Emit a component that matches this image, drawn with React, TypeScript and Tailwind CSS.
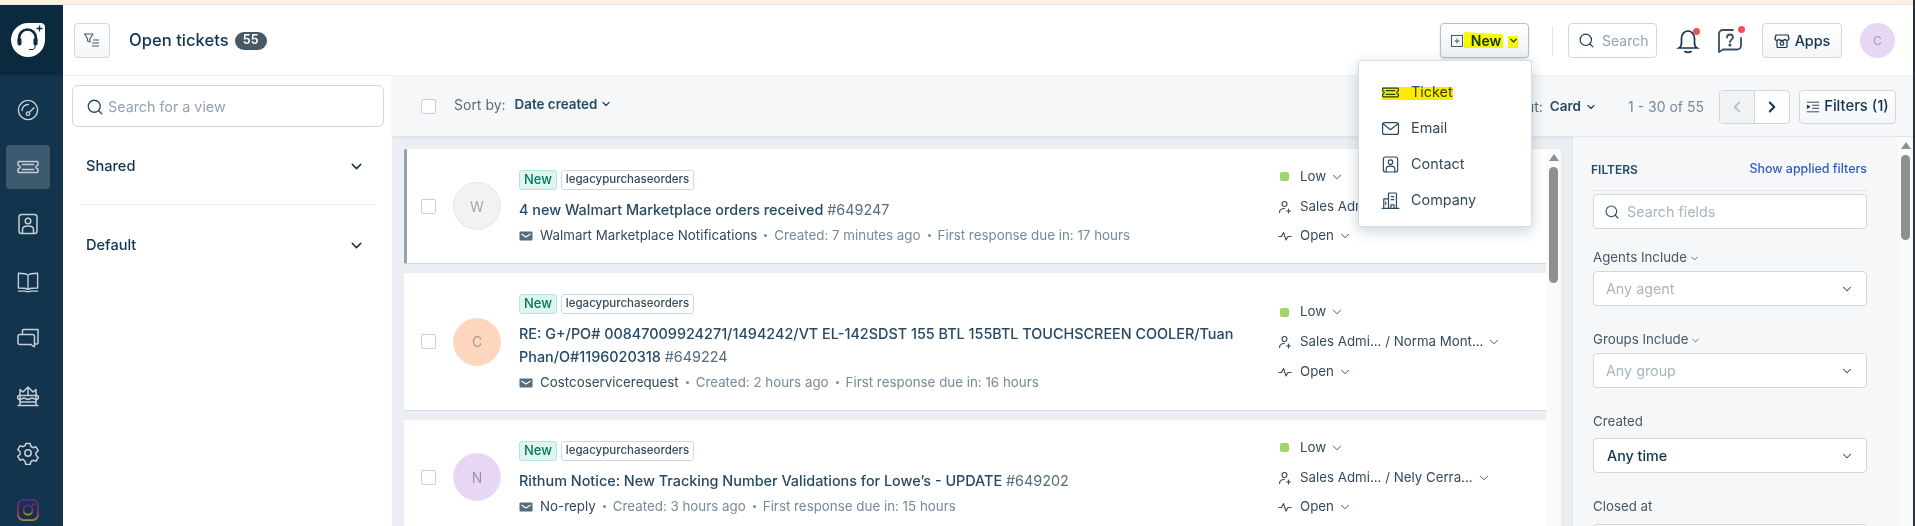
import { ChevronDown, ChevronLeft, ChevronRight, Search } from "lucide-react";
import type { ReactNode } from "react";

const FONT = "font-['Inter','Noto_Sans',sans-serif]";

function Ico({ size = 24, vb = 24, sw = 1.5, children, className = "" }: { size?: number; vb?: number; sw?: number; children: ReactNode; className?: string }) {
  return (
    <svg width={size} height={size} viewBox={`0 0 ${vb} ${vb}`} fill="none" stroke="currentColor" strokeWidth={sw} strokeLinecap="round" strokeLinejoin="round" className={className}>
      {children}
    </svg>
  );
}

const TicketGlyph = ({ size = 24, sw = 1.5 }: { size?: number; sw?: number }) => (
  <Ico size={size} sw={sw}>
    <path d="M3 6.5h18c.6 0 1 .4 1 1v2.4c-1.2.2-2 1-2 2.1s.8 1.9 2 2.1v2.4c0 .6-.4 1-1 1H3c-.6 0-1-.4-1-1v-2.4c1.2-.2 2-1 2-2.1s-.8-1.9-2-2.1V7.5c0-.6.4-1 1-1z" />
    <path d="M6.5 9.5h11M6.5 14.5h11" />
  </Ico>
);

const ContactGlyph = ({ size = 24, sw = 1.5 }: { size?: number; sw?: number }) => (
  <Ico size={size} sw={sw}>
    <rect x="3" y="2.5" width="18" height="19" rx="2.5" />
    <circle cx="12" cy="9" r="2.8" />
    <path d="M6.5 21v-3.5c0-2 1.8-3.5 5.5-3.5s5.5 1.5 5.500 3.500V21" />
  </Ico>
);

function SideItem({ active, children }: { active?: boolean; children: ReactNode }) {
  return (
    <div className={`flex h-[44px] w-[44px] shrink-0 items-center justify-center rounded-[4px] text-[#c5ced6] ${active ? "bg-[#3d5a6f]" : ""}`}>
      {children}
    </div>
  );
}

function Sidebar() {
  return (
    <aside className="flex h-full w-[63px] shrink-0 flex-col bg-[#12344d]">
      <div className="flex h-[70px] shrink-0 items-center justify-center bg-[#0b2a40] pr-[7px]">
        <svg width="36" height="36" viewBox="0 0 36 36">
          <path d="M18 1h13c2.2 0 4 1.800 4 4v13c0 9.400-7.600 17-17 17S1 27.400 1 18 8.600 1 18 1z" fill="#fff" />
          <path d="M9 20v-4a8.500 8.500 0 0 1 17 0v4" fill="none" stroke="#0b2a40" strokeWidth="2.600" />
          <rect x="7.500" y="16" width="4" height="7.500" rx="1.800" fill="#0b2a40" />
          <rect x="23.500" y="16" width="4" height="7.500" rx="1.800" fill="#0b2a40" />
          <path d="M25 23v2c0 1.600-1.200 2.500-3 2.500h-3" fill="none" stroke="#0b2a40" strokeWidth="1" />
          <path d="M29.500 3.500v6M26.500 6.500h6" fill="none" stroke="#0b2a40" strokeWidth="1.300" />
        </svg>
      </div>
      <nav className="flex flex-col items-center gap-[13.2px] overflow-hidden pt-[13px] pr-[7px]">
        <SideItem>
          <Ico size={22}>
            <circle cx="12" cy="12" r="10.500" />
            <path d="M5.500 12.500A6.500 6.500 0 0 1 12 6h.5M18.500 9.500l-5.200 5.200" />
            <circle cx="12" cy="16" r="1.900" />
          </Ico>
        </SideItem>
        <SideItem active>
          <TicketGlyph />
        </SideItem>
        <SideItem>
          <ContactGlyph />
        </SideItem>
        <SideItem>
          <Ico size={22}>
            <path d="M12 4.500C10.500 3 7 2.500 1.500 2.500v16c5.500 0 8.500.4 10.500 1.500 2-1.100 5-1.500 10.500-1.500v-16C17 2.500 13.500 3 12 4.500zM12 4.500V20" />
            <path d="M1.500 22H9l3 .8 3-.8h7.500" />
          </Ico>
        </SideItem>
        <SideItem>
          <Ico size={24}>
            <path d="M6.500 7V3.500c0-.6.400-1 1-1H22v13.500c0 .6-.4 1-1 1h-1.500" />
            <path d="M4 7.500h12.500c1.100 0 2 .9 2 2v9.500c0 .5-.5.800-.9.500L15 17.500H4c-1.100 0-2-.9-2-2v-6c0-1.100.9-2 2-2z" />
          </Ico>
        </SideItem>
        <SideItem>
          <Ico size={24}>
            <path d="M4 21.500V5.500l3 2.500 5-5 5 5 3-2.500v16M2 21.500h20M12 3.500v7" />
            <path d="M4 11.500H2.800a2.200 2.200 0 0 0 0 4H4M20 11.500h1.200a2.200 2.200 0 0 1 0 4H20M4 11.500h16M4 15.500l4-1.500 4 1.500 4-1.500 4 1.500M4 18h16" />
          </Ico>
        </SideItem>
        <SideItem>
          <Ico size={24}>
            <path d="M9.800 2.500h4.400l.7 3 2.100 1.200 3-.9 2.200 3.800-2.300 2.100v2.600l2.300 2.100-2.200 3.800-3-.9-2.100 1.200-.7 3H9.800l-.7-3L7 18.300l-3 .9-2.200-3.800 2.300-2.100v-2.600L1.800 8.600 4 4.800l3 .9 2.100-1.200z" />
            <circle cx="12" cy="12" r="3.200" />
          </Ico>
        </SideItem>
        <SideItem>
          <svg width="22" height="22" viewBox="0 0 24 24" fill="none">
            <defs>
              <linearGradient id="ig" x1="0" y1="0" x2="0" y2="1">
                <stop offset="0" stopColor="#5b2a8e" />
                <stop offset="0.6" stopColor="#8a2a5c" />
                <stop offset="1" stopColor="#b9823f" />
              </linearGradient>
            </defs>
            <rect x="1" y="1" width="22" height="22" rx="6" stroke="url(#ig)" strokeWidth="2" />
            <circle cx="12" cy="12" r="5" stroke="url(#ig)" strokeWidth="2" />
            <circle cx="18" cy="5.800" r="1.300" fill="#8a2a6c" />
          </svg>
        </SideItem>
      </nav>
    </aside>
  );
}

function HeaderBar() {
  return (
    <header className="relative flex h-[71px] shrink-0 items-center border-b border-[#ebeff3] bg-white pt-[1px] pr-[18px] pl-[11px]">
      <button className="flex h-[35px] w-[36px] items-center justify-center rounded-[4px] border border-[#cfd7df] bg-gradient-to-b from-white to-[#f3f5f7] text-[#475867]">
        <svg width="18" height="18" viewBox="0 0 18 18" fill="none" stroke="currentColor" strokeWidth="1.100">
          <path d="M1.500 2h8.500L7 6.500V10L4.500 9V6.500z" strokeLinejoin="round" />
          <path d="M10 8h6M9 11h7M9 14h7" />
        </svg>
      </button>
      <h1 className="ml-[19px] text-[16.6px] font-medium text-[#12344d]">Open tickets</h1>
      <span className="ml-[6px] flex h-[18px] w-[32px] items-center justify-center rounded-full bg-[#475867] text-[12.500px] font-semibold text-white">55</span>

      <div className="ml-auto flex items-center">
        <button className="relative flex h-[35px] w-[89px] items-center justify-center rounded-[4px] border border-[#b4bfca] bg-gradient-to-b from-white to-[#eef1f4] shadow-[0_1px_2px_rgba(18,52,77,0.2)] text-[#12344d]">
          <svg width="14" height="14" viewBox="0 0 14 14" fill="none" stroke="#475867" strokeWidth="1" className="mr-[7px]">
            <rect x="1.500" y="1.500" width="11" height="11" />
            <path d="M7 4.500v5M4.500 7h5" />
          </svg>
          <span className="text-[14px] font-semibold">New</span>
          <ChevronDown size={11} strokeWidth={3} className="ml-[7px]" />
          <span className="absolute top-[8px] left-[23px] h-[16px] w-[39px] bg-[#ffff00] mix-blend-multiply [clip-path:polygon(0_0,100%_15%,100%_100%,0_100%)]" />
          <span className="absolute top-[12px] left-[67px] h-[12px] w-[10px] bg-[#ffff00] mix-blend-multiply" />
        </button>
        <div className="mr-[15px] ml-[23px] h-[30px] w-px bg-[#dfe5ea]" />
        <div className="flex h-[35px] w-[89px] items-center rounded-[4px] border border-[#cfd7df] bg-white pl-[9px]">
          <Search size={17} strokeWidth={1.600} className="text-[#12344d]" />
          <span className="ml-[7px] text-[14px] text-[#92a2b1]">Search</span>
        </div>
        <div className="relative ml-[19px] text-[#12344d]">
          <svg width="24" height="28" viewBox="0 0 24 28" fill="none" stroke="currentColor" strokeWidth="1.700" strokeLinecap="round">
            <path d="M3 21c1.500-1 2.500-2.500 2.500-5v-4.500C5.500 7 8.500 4 12 4s6.500 3 6.500 7.500V16c0 2.500 1 4 2.500 5zM9 24.500c1.500 1.200 4.500 1.200 6 0" />
          </svg>
          <span className="absolute top-[1px] right-[0px] h-[7px] w-[7px] rounded-full bg-[#f24f4f]" />
        </div>
        <div className="relative ml-[16px] text-[#3b4f60]">
          <svg width="28" height="28" viewBox="0 0 28 28" fill="none" stroke="currentColor" strokeWidth="1.800" strokeLinecap="round">
            <path d="M17 3H7C4.800 3 3 4.800 3 7v18l4-2.500h14c2.200 0 4-1.800 4-4V11" strokeLinejoin="round" />
            <path d="M11 10.500c0-1.700 1.300-3 3-3s3 1.200 3 2.800c0 2.200-3 2.400-3 4.700" />
            <circle cx="14" cy="18" r="0.700" fill="currentColor" />
          </svg>
          <span className="absolute top-[-1px] right-[-1px] h-[7px] w-[7px] rounded-full bg-[#f24f4f]" />
        </div>
        <button className="ml-[18px] flex h-[35px] w-[80px] items-center justify-center rounded-[4px] border border-[#cfd7df] bg-gradient-to-b from-white to-[#f3f5f7] text-[14.400px] font-medium text-[#12344d]">
          <svg width="16" height="16" viewBox="0 0 16 16" fill="none" stroke="currentColor" strokeWidth="1.200" className="mr-[5px]">
            <path d="M3 7v6.500c0 .6.400 1 1 1h8c.6 0 1-.4 1-1V7M2 2h12l1 3.500c0 1-.9 1.800-2 1.800-.8 0-1.500-.4-2-1-.5.6-1.200 1-2 1h-2c-.8 0-1.500-.4-2-1-.5.6-1.200 1-2 1-1.100 0-2-.8-2-1.800z" strokeLinejoin="round" />
            <circle cx="8" cy="10.500" r="1.800" />
          </svg>
          Apps
        </button>
        <div className="ml-[18px] flex h-[35px] w-[35px] items-center justify-center rounded-full bg-[#e8d7f4] text-[12px] text-[#92a2b1]">C</div>
      </div>

      <Dropdown />
    </header>
  );
}

function MenuRow({ icon, label }: { icon: ReactNode; label: string }) {
  return (
    <li className="flex h-[36px] items-center">
      <span className="flex w-[30px] text-[#264966]">{icon}</span>
      <span className="text-[14.400px] text-[#344a5d]">{label}</span>
    </li>
  );
}

function Dropdown() {
  return (
    <div className="absolute top-[55px] right-[381px] z-20 h-[167px] w-[174px] rounded-[2px] border border-[#d5dbe1] bg-white shadow-[0_4px_14px_rgba(18,52,77,0.22)]">
      <ul className="px-[22px] pt-[13px]">
        <MenuRow icon={<TicketGlyph size={19} sw={1.6} />} label="Ticket" />
        <MenuRow
          icon={
            <Ico size={19} sw={1.5}>
              <rect x="2" y="4.500" width="20" height="15" rx="2.500" />
              <path d="M2.500 6l9.500 7.500L21.500 6" />
            </Ico>
          }
          label="Email"
        />
        <MenuRow icon={<ContactGlyph size={19} sw={1.5} />} label="Contact" />
        <MenuRow
          icon={
            <Ico size={19} sw={1.5}>
              <path d="M1.500 22h21M3.500 22V10h6M9.500 22V3.500c0-.6.400-1 1-1h8c.6 0 1 .4 1 1V22M12.500 22v-4.500h4V22M13 7h3M13 11h3M6 14v3" />
            </Ico>
          }
          label="Company"
        />
      </ul>
      <span className="absolute top-[26px] left-[23px] h-[13px] w-[71px] bg-[#ffea00] mix-blend-multiply" />
    </div>
  );
}

function ViewsPanel() {
  return (
    <div className="flex h-full w-[329px] shrink-0 flex-col bg-white px-[9px] pt-[9px]">
      <div className="flex h-[42px] w-[312px] items-center rounded-[6px] border border-[#cfd7df] pt-[2px] pl-[13px]">
        <Search size={18} strokeWidth={1.7} className="text-[#264966]" />
        <span className="ml-[4px] text-[14.300px] text-[#92a2b1]">Search for a view</span>
      </div>
      <div className="mt-[29px] flex items-center justify-between pr-[18px] pl-[14px] text-[14.600px] font-medium text-[#12344d]">
        Shared
        <ChevronDown size={17} strokeWidth={2} />
      </div>
      <div className="mx-[8px] mt-[26px] h-px w-[296px] bg-[#ebeff3]" />
      <div className="mt-[30px] flex items-center justify-between pr-[18px] pl-[14px] text-[14.600px] font-medium text-[#12344d]">
        Default
        <ChevronDown size={17} strokeWidth={2} />
      </div>
    </div>
  );
}

function Toolbar() {
  return (
    <div className="flex h-[61px] shrink-0 items-center border-b border-[#dfe5ea] bg-[#f5f7f9] pr-[17px] pl-[29px] shadow-[0_1px_3px_rgba(18,52,77,0.08)]">
      <span className="h-[15px] w-[15px] rounded-[2px] border border-[#c7d0d9] bg-white" />
      <div className="flex items-center pb-[4px]">
        <span className="ml-[18px] text-[14px] text-[#576c7d]">Sort by:</span>
        <span className="ml-[9px] flex items-center text-[13.400px] font-semibold text-[#264966]">
          Date created
          <ChevronDown size={12} strokeWidth={2.5} className="ml-[3px]" />
        </span>
      </div>
      <div className="ml-auto flex items-center pt-[1px]">
        <span className="text-[14px] text-[#576c7d]">Layout:</span>
        <span className="ml-[7px] flex items-center text-[13.500px] font-semibold text-[#264966]">
          Card
          <ChevronDown size={12} strokeWidth={2.5} className="ml-[4px]" />
        </span>
        <span className="ml-[31px] text-[14px] text-[#768a9b]">1 - 30 of 55</span>
        <div className="ml-[15px] flex h-[34px] rounded-[4px] border border-[#cfd7df]">
          <div className="flex w-[35px] items-center justify-center border-r border-[#cfd7df] bg-[#f0f2f4] text-[#b8c3cd]">
            <ChevronLeft size={18} strokeWidth={2.4} />
          </div>
          <div className="flex w-[34px] items-center justify-center rounded-r-[4px] bg-white text-[#12344d]">
            <ChevronRight size={18} strokeWidth={2.6} />
          </div>
        </div>
        <button className="ml-[9px] flex h-[34px] w-[97px] items-center justify-center rounded-[4px] border border-[#cfd7df] bg-gradient-to-b from-white to-[#f3f5f7] text-[14.800px] font-medium text-[#12344d]">
          <svg width="14" height="14" viewBox="0 0 16 16" fill="none" stroke="currentColor" strokeWidth="1" className="mr-[4px]">
            <path d="M1 2.500h14M7 6h8M7 9.500h8M1 13.500h14" />
            <path d="M1.500 6l3 1.800-3 1.800z" fill="currentColor" />
          </svg>
          Filters (1)
        </button>
      </div>
    </div>
  );
}

type Ticket = { initial: string; avatar: string; avatarText: string; title: string; id: string; from: string; created: string; due: string; agent: string; active?: boolean };

const TICKETS: Ticket[] = [
  {
    initial: "W",
    avatar: "bg-[#f3f1f2] border border-[#e8e6e7]",
    avatarText: "text-[#a9a9a9]",
    title: "4 new Walmart Marketplace orders received",
    id: "#649247",
    from: "Walmart Marketplace Notifications",
    created: "Created: 7 minutes ago",
    due: "First response due in: 17 hours",
    agent: "Sales Admi... / Norma Mont...",
    active: true,
  },
  {
    initial: "C",
    avatar: "bg-[#fdd6bd] border border-[#fbdcc8]",
    avatarText: "text-[#a39a94]",
    title: "RE: G+/PO# 00847009924271/1494242/VT EL-142SDST 155 BTL 155BTL TOUCHSCREEN COOLER/Tuan Phan/O#1196020318",
    id: "#649224",
    from: "Costcoservicerequest",
    created: "Created: 2 hours ago",
    due: "First response due in: 16 hours",
    agent: "Sales Admi... / Norma Mont...",
  },
  {
    initial: "N",
    avatar: "bg-[#e8d7f4] border border-[#ecdff6]",
    avatarText: "text-[#9b95a3]",
    title: "Rithum Notice: New Tracking Number Validations for Lowe’s - UPDATE",
    id: "#649202",
    from: "No-reply",
    created: "Created: 3 hours ago",
    due: "First response due in: 15 hours",
    agent: "Sales Admi... / Nely Cerra...",
  },
];

function Dot() {
  return <span className="mx-[7px] inline-block h-[3px] w-[3px] rounded-full bg-[#768a9b] align-middle" />;
}

function TicketCard({ t }: { t: Ticket }) {
  return (
    <article className={`flex shrink-0 items-center rounded-l-[2px] border-b border-[#d5dce3] bg-white ${t.active ? "border-l-[3px] border-l-[#92a2b1] pl-[14px]" : "pl-[17px]"}`}>
      <span className="h-[15px] w-[15px] shrink-0 rounded-[2px] border border-[#c7d0d9] bg-white" />
      <div className={`ml-[17px] flex h-[48px] w-[48px] shrink-0 items-center justify-center rounded-full text-[14px] ${t.avatar} ${t.avatarText}`}>{t.initial}</div>
      <div className="ml-[18px] w-[720px] shrink-0 pt-[21px] pb-[17px]">
        <div className="flex h-[20px] gap-[4px]">
          <span className="flex h-[20px] w-[38px] items-center justify-center rounded-[3px] border border-[#b4e5da] bg-[#e0f5f1] text-[13px] font-medium text-[#00795b]">New</span>
          <span className="flex h-[20px] w-[133px] items-center justify-center rounded-[3px] border border-[#cfd7df] bg-white text-[11.500px] font-medium text-[#344a5d]">legacypurchaseorders</span>
        </div>
        <p className="mt-[8px] text-[14.400px] leading-[23px] font-medium text-[#264966]">
          {t.title} <span className="font-normal text-[#576c7d]">{t.id}</span>
        </p>
        <div className="mt-[4px] flex h-[21px] items-center text-[13.350px] text-[#768a9b]">
          <svg width="14" height="14" viewBox="0 0 14 14" className="mr-[7px] shrink-0">
            <path d="M1.500 2.500h11c.6 0 1 .4 1 1v7c0 .6-.4 1-1 1h-11c-.6 0-1-.4-1-1v-7c0-.6.400-1 1-1z" fill="#576c7d" />
            <path d="M2.500 5L7 8l4.500-3" fill="none" stroke="#fff" strokeWidth="1.100" />
          </svg>
          <span className="text-[#344a5d]">{t.from}</span>
          <Dot />
          <span>{t.created}</span>
          <Dot />
          <span>{t.due}</span>
        </div>
      </div>
      <div className="mt-[1px] ml-[41px] flex h-[89px] flex-col justify-between text-[13.300px] text-[#344a5d]">
        <div className="flex h-[30px] items-center">
          <span className="h-[9px] w-[9px] rounded-[2px] bg-[#a0d76a]" />
          <span className="ml-[11px]">Low</span>
          <ChevronDown size={14} strokeWidth={1.6} className="ml-[4px]" />
        </div>
        <div className="flex h-[30px] items-center">
          <svg width="14" height="14" viewBox="0 0 14 14" fill="none" stroke="currentColor" strokeWidth="1.100" strokeLinecap="round" className="-ml-[2px]">
            <circle cx="6.500" cy="4" r="2.500" />
            <path d="M1.500 12.500c0-2.500 2-4 5-4M10.500 9v4M8.500 11h4" />
          </svg>
          <span className="ml-[8px] whitespace-nowrap">{t.agent}</span>
          <ChevronDown size={14} strokeWidth={1.6} className="ml-[4px]" />
        </div>
        <div className="flex h-[30px] items-center">
          <svg width="14" height="14" viewBox="0 0 14 14" fill="none" stroke="currentColor" strokeWidth="1.100" strokeLinejoin="round" className="-ml-[2px]">
            <path d="M0.500 7.500H3.500L5.500 3.500 8 11 10 7.500H13.500" />
          </svg>
          <span className="ml-[8px]">Open</span>
          <ChevronDown size={14} strokeWidth={1.6} className="ml-[4px]" />
        </div>
      </div>
    </article>
  );
}

function Scrollbar({ className, thumb }: { className: string; thumb: string }) {
  return (
    <div className={`flex w-[15px] shrink-0 flex-col items-center bg-[#fafafa] ${className}`}>
      <span className="mt-[5px] h-0 w-0 border-x-[5px] border-b-[7px] border-x-transparent border-b-[#8f8f8f]" />
      <span className={`mt-[6px] w-[9px] rounded-full bg-[#8f8f8f] ${thumb}`} />
    </div>
  );
}

function FilterSelect({ label, value, muted, gapClass }: { label: string; value: string; muted?: boolean; gapClass: string }) {
  return (
    <div className="shrink-0">
      <div className="flex h-[20px] items-center pt-[2px] text-[13.300px] text-[#475867]">
        {label}
        {muted && <ChevronDown size={11} strokeWidth={1.8} className="ml-[2px]" />}
      </div>
      <div className={`${gapClass} flex h-[35px] items-center justify-between rounded-[4px] border border-[#cfd7df] bg-white pr-[12px] ${muted ? "pl-[12px]" : "pl-[13px]"}`}>
        <span className={muted ? "text-[14.300px] text-[#a9b5c0]" : "text-[14.300px] font-medium text-[#12344d]"}>{value}</span>
        <ChevronDown size={14} strokeWidth={1.8} className="text-[#264966]" />
      </div>
    </div>
  );
}

function FiltersPanel() {
  return (
    <div className="flex h-full flex-1 border-l border-[#dfe5ea] bg-[#f5f7f9]">
      <div className="flex w-[325px] flex-col overflow-hidden pr-[31px] pl-[20px]">
        <div className="flex h-[54px] shrink-0 items-center justify-between border-b border-[#dfe5ea] pt-[12px]">
          <span className="-ml-[2px] text-[12px] font-semibold text-[#264966]">FILTERS</span>
          <span className="text-[12.450px] font-medium text-[#2c5cc5]">Show applied filters</span>
        </div>
        <div className="mt-[3px] flex h-[35px] shrink-0 items-center rounded-[4px] border border-[#cfd7df] bg-white pl-[10px]">
          <Search size={16} strokeWidth={1.6} className="text-[#264966]" />
          <span className="ml-[7px] text-[14.300px] text-[#a9b5c0]">Search fields</span>
        </div>
        <div className="mt-[18px] flex flex-col gap-[23px]">
          <FilterSelect label="Agents Include" value="Any agent" muted gapClass="mt-[4px]" />
          <FilterSelect label="Groups Include" value="Any group" muted gapClass="mt-[4px]" />
          <FilterSelect label="Created" value="Any time" gapClass="mt-[7px]" />
          <FilterSelect label="Closed at" value="Any time" gapClass="mt-[8px]" />
        </div>
      </div>
      <Scrollbar className="h-full" thumb="h-[85px]" />
    </div>
  );
}

export default function App() {
  return (
    <div className={`flex h-[526px] w-[1915px] flex-col overflow-hidden border-r-2 border-r-[#2a2e35] bg-white ${FONT}`}>
      <div className="h-[5px] shrink-0 border-b border-[#dfe5ea] bg-[#fdf0df]" />
      <div className="flex min-h-0 flex-1">
        <Sidebar />
        <div className="flex min-w-0 flex-1 flex-col">
          <HeaderBar />
          <div className="flex min-h-0 flex-1">
            <ViewsPanel />
            <div className="flex min-w-0 flex-1 flex-col bg-[#ebeff3]">
              <Toolbar />
              <div className="flex min-h-0 flex-1">
                <div className="flex w-[1180px] shrink-0 pt-[12px] pl-[12px]">
                  <div className="flex w-[1142px] shrink-0 flex-col gap-[9px] overflow-hidden">
                    {TICKETS.map((t) => (
                      <TicketCard key={t.id} t={t} />
                    ))}
                  </div>
                  <Scrollbar className="h-full" thumb="h-[116px]" />
                </div>
                <FiltersPanel />
              </div>
            </div>
          </div>
        </div>
      </div>
    </div>
  );
}
